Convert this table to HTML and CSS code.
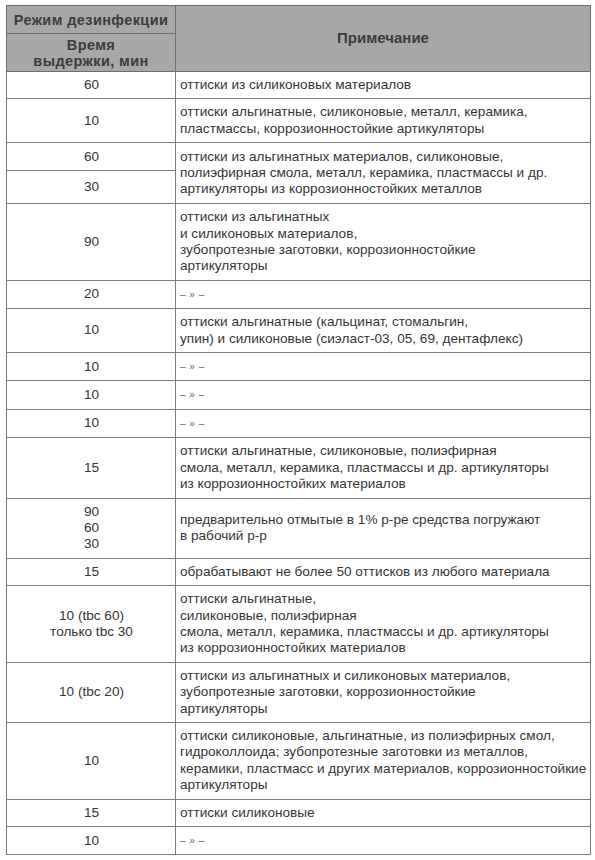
FILE: index.html
```html
<!DOCTYPE html>
<html lang="ru">
<head>
<meta charset="utf-8">
<title>Режим дезинфекции</title>
<link rel="stylesheet" href="styles.css">
</head>
<body>
<table class="grid">
  <colgroup><col class="c-time"><col class="c-note"></colgroup>
  <thead>
    <tr class="h1">
      <th>Режим дезинфекции</th>
      <th rowspan="2" class="h-note">Примечание</th>
    </tr>
    <tr class="h2">
      <th>Время<br>выдержки, мин</th>
    </tr>
  </thead>
  <tbody>
    <tr><td class="t">60</td><td class="n">оттиски из силиконовых материалов</td></tr>
    <tr><td class="t">10</td><td class="n">оттиски альгинатные, силиконовые, металл, керамика,<br>пластмассы, коррозионностойкие артикуляторы</td></tr>
    <tr class="split-a"><td class="t">60</td><td class="n" rowspan="2">оттиски из альгинатных материалов, силиконовые,<br>полиэфирная смола, металл, керамика, пластмассы и др.<br>артикуляторы из коррозионностойких металлов</td></tr>
    <tr class="split-b"><td class="t">30</td></tr>
    <tr><td class="t">90</td><td class="n">оттиски из альгинатных<br>и силиконовых материалов,<br>зубопротезные заготовки, коррозионностойкие<br>артикуляторы</td></tr>
    <tr><td class="t">20</td><td class="n"><span class="ditto">– » –</span></td></tr>
    <tr><td class="t">10</td><td class="n">оттиски альгинатные (кальцинат, стомальгин,<br>упин) и силиконовые (сиэласт-03, 05, 69, дентафлекс)</td></tr>
    <tr><td class="t">10</td><td class="n"><span class="ditto">– » –</span></td></tr>
    <tr><td class="t">10</td><td class="n"><span class="ditto">– » –</span></td></tr>
    <tr><td class="t">10</td><td class="n"><span class="ditto">– » –</span></td></tr>
    <tr><td class="t">15</td><td class="n">оттиски альгинатные, силиконовые, полиэфирная<br>смола, металл, керамика, пластмассы и др. артикуляторы<br>из коррозионностойких материалов</td></tr>
    <tr><td class="t">90<br>60<br>30</td><td class="n">предварительно отмытые в 1% р-ре средства погружают<br>в рабочий р-р</td></tr>
    <tr><td class="t">15</td><td class="n">обрабатывают не более 50 оттисков из любого материала</td></tr>
    <tr><td class="t">10 (tbc 60)<br>только tbc 30</td><td class="n">оттиски альгинатные,<br>силиконовые, полиэфирная<br>смола, металл, керамика, пластмассы и др. артикуляторы<br>из коррозионностойких материалов</td></tr>
    <tr><td class="t">10 (tbc 20)</td><td class="n">оттиски из альгинатных и силиконовых материалов,<br>зубопротезные заготовки, коррозионностойкие<br>артикуляторы</td></tr>
    <tr><td class="t">10</td><td class="n">оттиски силиконовые, альгинатные, из полиэфирных смол,<br>гидроколлоида; зубопротезные заготовки из металлов,<br>керамики, пластмасс и других материалов, коррозионностойкие<br>артикуляторы</td></tr>
    <tr><td class="t">15</td><td class="n">оттиски силиконовые</td></tr>
    <tr><td class="t">10</td><td class="n"><span class="ditto">– » –</span></td></tr>
  </tbody>
</table>
</body>
</html>
```

FILE: styles.css
```css
html, body {
  margin: 0;
  padding: 0;
  background: #ffffff;
}

body {
  padding: 5px 0 0 6px;
  font-family: "Liberation Sans", Arial, sans-serif;
  color: #363636;
}

.grid {
  border-collapse: collapse;
  width: 584px;
  table-layout: fixed;
  border: 1px solid #6a6a6a;
}

.c-time { width: 169px; }
.c-note { width: 415px; }

.grid th {
  background: #a7a7a7;
  color: #3c3c3c;
  font-weight: bold;
  font-size: 14.5px;
  letter-spacing: 0.4px;
  border: 1px solid #6f6f6f;
  text-align: center;
  padding: 0;
}

.h1 th { height: 27px; }
.h1 th.h-note { font-size: 15px; letter-spacing: 0; padding-bottom: 2px; }
.h2 th { height: 36px; line-height: 16px; padding-top: 1px; }

.grid td {
  border: 1px solid #7c7c7c;
  font-size: 13.6px;
  line-height: 16.4px;
  padding: 5px 3px 5px 4px;
  vertical-align: middle;
}

.t { text-align: center; }
.n { text-align: left; white-space: nowrap; }

.split-a td.t { height: 17px; }
.split-b td.t { height: 22px; }

.ditto {
  font-size: 10px;
  color: #6a6a6a;
  letter-spacing: 0.5px;
}
```
